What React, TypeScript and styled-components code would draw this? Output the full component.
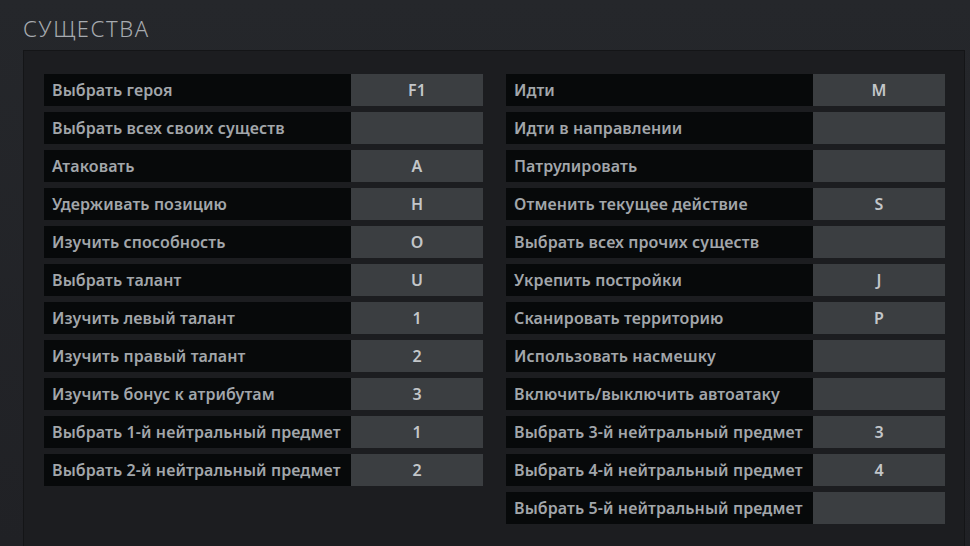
import styled, { createGlobalStyle } from 'styled-components'

const GlobalStyle = createGlobalStyle`
  html, body {
    margin: 0;
    padding: 0;
    background: #222428;
    overflow: hidden;
  }
  body {
    font-family: 'Noto Sans', 'Open Sans', sans-serif;
  }
`

const Page = styled.div`
  width: 970px;
  height: 546px;
  padding: 13px 0 0 23px;
  box-sizing: border-box;
  background: linear-gradient(180deg, #25272b 0%, #202125 100%);
`

const Title = styled.h1`
  margin: 0;
  font-family: 'Noto Sans', sans-serif;
  font-weight: 300;
  font-size: 22px;
  line-height: 30px;
  letter-spacing: 1.6px;
  color: #a7abb0;
`

const Panel = styled.div`
  margin-top: 7px;
  width: 942px;
  height: 520px;
  box-sizing: border-box;
  border: 1px solid #141517;
  background: #1c1d20;
  padding: 23px 19px 0 20px;
  display: grid;
  grid-template-columns: 439px 439px;
  column-gap: 23px;
  align-items: start;
`

const Column = styled.div`
  display: flex;
  flex-direction: column;
  gap: 6px;
`

const Row = styled.div`
  display: grid;
  grid-template-columns: 1fr 132px;
  height: 32px;
`

const Label = styled.div`
  background: #07090a;
  color: #a2a6aa;
  font-size: 16px;
  font-weight: 600;
  letter-spacing: 0.1px;
  padding-left: 8px;
  display: flex;
  align-items: center;
  white-space: nowrap;
`

const Key = styled.div`
  background: #3b3e41;
  color: #c3c6c9;
  font-size: 16px;
  font-weight: 600;
  display: flex;
  align-items: center;
  justify-content: center;
`

const left: [string, string][] = [
  ['Выбрать героя', 'F1'],
  ['Выбрать всех своих существ', ''],
  ['Атаковать', 'A'],
  ['Удерживать позицию', 'H'],
  ['Изучить способность', 'O'],
  ['Выбрать талант', 'U'],
  ['Изучить левый талант', '1'],
  ['Изучить правый талант', '2'],
  ['Изучить бонус к атрибутам', '3'],
  ['Выбрать 1-й нейтральный предмет', '1'],
  ['Выбрать 2-й нейтральный предмет', '2'],
]

const right: [string, string][] = [
  ['Идти', 'M'],
  ['Идти в направлении', ''],
  ['Патрулировать', ''],
  ['Отменить текущее действие', 'S'],
  ['Выбрать всех прочих существ', ''],
  ['Укрепить постройки', 'J'],
  ['Сканировать территорию', 'P'],
  ['Использовать насмешку', ''],
  ['Включить/выключить автоатаку', ''],
  ['Выбрать 3-й нейтральный предмет', '3'],
  ['Выбрать 4-й нейтральный предмет', '4'],
  ['Выбрать 5-й нейтральный предмет', ''],
]

const BindList = ({ items }: { items: [string, string][] }) => (
  <Column>
    {items.map(([label, key]) => (
      <Row key={label}>
        <Label>{label}</Label>
        <Key>{key}</Key>
      </Row>
    ))}
  </Column>
)

const App = () => {
  return (
    <>
      <GlobalStyle />
      <Page>
        <Title>СУЩЕСТВА</Title>
        <Panel>
          <BindList items={left} />
          <BindList items={right} />
        </Panel>
      </Page>
    </>
  )
}

export default App
